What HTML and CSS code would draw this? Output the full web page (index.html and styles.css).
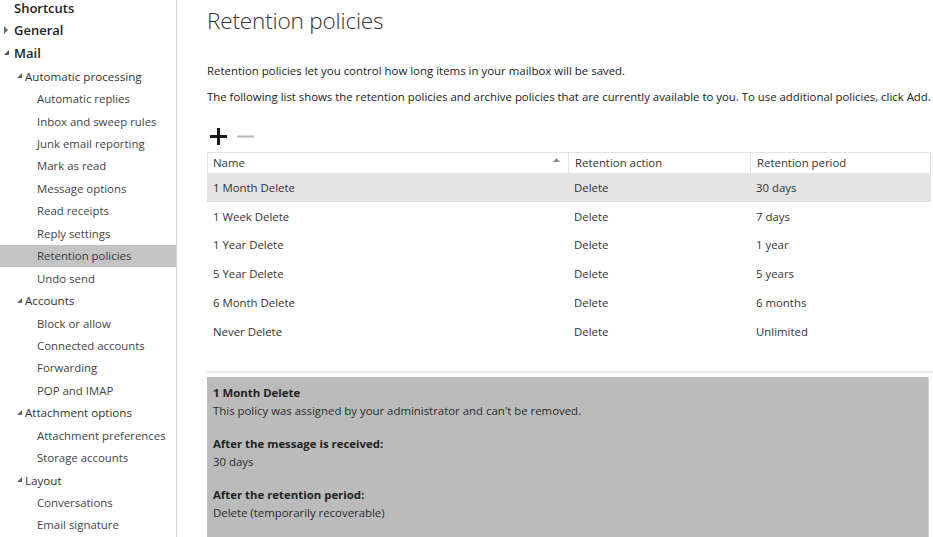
FILE: index.html
```html
<!DOCTYPE html>
<html>
<head>
<meta charset="utf-8">
<link rel="stylesheet" href="styles.css">
</head>
<body>
<div class="app">
  <nav class="sidebar">
    <div class="nav-top shortcuts"><span class="tw"></span>Shortcuts</div>
    <div class="nav-top"><span class="tw"><svg width="5" height="8" viewBox="0 0 5 8"><polygon points="0,0 4,4 0,8" fill="#6a6a6a"/></svg></span>General</div>
    <div class="nav-top"><span class="tw"><svg width="6" height="6" viewBox="0 0 6 6"><polygon points="5,0 5,5 0,5" fill="#555"/></svg></span>Mail</div>
    <div class="nav-grp"><span class="tw2"><svg width="6" height="6" viewBox="0 0 6 6"><polygon points="5,0 5,5 0,5" fill="#666"/></svg></span>Automatic processing</div>
    <div class="nav-item">Automatic replies</div>
    <div class="nav-item">Inbox and sweep rules</div>
    <div class="nav-item">Junk email reporting</div>
    <div class="nav-item">Mark as read</div>
    <div class="nav-item">Message options</div>
    <div class="nav-item">Read receipts</div>
    <div class="nav-item">Reply settings</div>
    <div class="nav-item selected">Retention policies</div>
    <div class="nav-item">Undo send</div>
    <div class="nav-grp"><span class="tw2"><svg width="6" height="6" viewBox="0 0 6 6"><polygon points="5,0 5,5 0,5" fill="#666"/></svg></span>Accounts</div>
    <div class="nav-item">Block or allow</div>
    <div class="nav-item">Connected accounts</div>
    <div class="nav-item">Forwarding</div>
    <div class="nav-item">POP and IMAP</div>
    <div class="nav-grp"><span class="tw2"><svg width="6" height="6" viewBox="0 0 6 6"><polygon points="5,0 5,5 0,5" fill="#666"/></svg></span>Attachment options</div>
    <div class="nav-item">Attachment preferences</div>
    <div class="nav-item">Storage accounts</div>
    <div class="nav-grp"><span class="tw2"><svg width="6" height="6" viewBox="0 0 6 6"><polygon points="5,0 5,5 0,5" fill="#666"/></svg></span>Layout</div>
    <div class="nav-item">Conversations</div>
    <div class="nav-item">Email signature</div>
  </nav>
  <main class="content">
    <h1 class="title">Retention policies</h1>
    <p class="intro">Retention policies let you control how long items in your mailbox will be saved.</p>
    <p class="intro2">The following list shows the retention policies and archive policies that are currently available to you. To use additional policies, click Add.</p>
    <div class="toolbar">
      <svg class="tb-icon" width="17" height="17" viewBox="0 0 17 17"><rect x="7" y="0" width="3" height="17" fill="#1a1a1a"/><rect x="0" y="7" width="17" height="3" fill="#1a1a1a"/></svg>
      <svg class="tb-icon" width="17" height="17" viewBox="0 0 17 17"><rect x="0" y="7.5" width="17" height="2" fill="#b5b5b5"/></svg>
    </div>
    <div class="table">
      <div class="thead">
        <div class="th th-name">Name<svg class="sort" width="7" height="4" viewBox="0 0 7 4"><polygon points="0,4 3.5,0 7,4" fill="#888"/></svg></div>
        <div class="th">Retention action</div>
        <div class="th">Retention period</div>
      </div>
      <div class="tr sel"><div class="td">1 Month Delete</div><div class="td">Delete</div><div class="td">30 days</div></div>
      <div class="tr"><div class="td">1 Week Delete</div><div class="td">Delete</div><div class="td">7 days</div></div>
      <div class="tr"><div class="td">1 Year Delete</div><div class="td">Delete</div><div class="td">1 year</div></div>
      <div class="tr"><div class="td">5 Year Delete</div><div class="td">Delete</div><div class="td">5 years</div></div>
      <div class="tr"><div class="td">6 Month Delete</div><div class="td">Delete</div><div class="td">6 months</div></div>
      <div class="tr"><div class="td">Never Delete</div><div class="td">Delete</div><div class="td">Unlimited</div></div>
    </div>
    <div class="divider"></div>
    <div class="details">
      <div class="d-group">
        <div class="d-label">1 Month Delete</div>
        <div class="d-text">This policy was assigned by your administrator and can't be removed.</div>
      </div>
      <div class="d-group">
        <div class="d-label">After the message is received:</div>
        <div class="d-text">30 days</div>
      </div>
      <div class="d-group">
        <div class="d-label">After the retention period:</div>
        <div class="d-text">Delete (temporarily recoverable)</div>
      </div>
    </div>
  </main>
</div>
</body>
</html>
```

FILE: styles.css
```css
html, body {
  margin: 0;
  padding: 0;
  height: 100%;
  overflow: hidden;
  background: #ffffff;
}
body {
  font-family: "Open Sans", "Noto Sans", "Liberation Sans", sans-serif;
  color: #333333;
}
.app {
  display: flex;
  height: 537px;
  overflow: hidden;
}
.sidebar {
  width: 176px;
  flex: 0 0 176px;
  border-right: 1px solid #d4d4d4;
  margin-top: -3px;
  display: flex;
  flex-direction: column;
}
.nav-top {
  height: 23.5px;
  display: flex;
  align-items: center;
  font-size: 13px;
  font-weight: 600;
  color: #1e1e1e;
  white-space: nowrap;
}
.nav-top.shortcuts {
  height: 21px;
}
.tw {
  width: 14px;
  flex: 0 0 14px;
  display: flex;
  align-items: center;
  padding-left: 4px;
  box-sizing: border-box;
}
.nav-grp {
  height: 22.45px;
  display: flex;
  align-items: center;
  font-size: 11.6px;
  color: #333;
  white-space: nowrap;
  padding-left: 17px;
}
.tw2 {
  width: 8px;
  flex: 0 0 8px;
  display: flex;
  align-items: center;
}
.nav-item {
  height: 22.45px;
  display: flex;
  align-items: center;
  font-size: 11.4px;
  color: #444;
  padding-left: 37px;
  white-space: nowrap;
}
.nav-item.selected {
  background: #c4c4c4;
  color: #3a3a3a;
}
.content {
  flex: 1;
  padding-left: 30px;
  min-width: 0;
  white-space: nowrap;
  overflow: hidden;
}
.title {
  margin: 4px 0 0 0;
  font-size: 22.6px;
  font-weight: 300;
  color: #333;
  line-height: 34px;
  letter-spacing: -0.2px;
}
.intro {
  margin: 25px 0 0 0;
  font-size: 11.45px;
  line-height: 16px;
  color: #222;
}
.intro2 {
  margin: 10px 0 0 0;
  font-size: 11.38px;
  line-height: 16px;
  color: #222;
}
.toolbar {
  display: flex;
  gap: 10px;
  margin-top: 23px;
  padding-left: 3px;
  height: 17px;
}
.table {
  margin-top: 7px;
  width: 724px;
  font-size: 11.4px;
  color: #333;
}
.thead {
  display: grid;
  grid-template-columns: 360px 182px 182px;
  height: 21px;
  border: 1px solid #e3e3e3;
  border-bottom: none;
  box-sizing: border-box;
}
.th {
  display: flex;
  align-items: center;
  padding-left: 6px;
  border-left: 1px solid #e3e3e3;
  line-height: 20px;
}
.th:first-child {
  border-left: none;
  padding-left: 5px;
}
.th-name {
  justify-content: space-between;
  padding-right: 8px;
}
.sort {
  margin-top: -6px;
}
.tr {
  display: grid;
  grid-template-columns: 360px 182px 182px;
  height: 28.8px;
  align-items: center;
}
.tr.sel {
  background: #e3e3e3;
}
.td {
  padding-left: 6px;
}
.td + .td {
  padding-left: 7px;
}
.divider {
  margin-top: 25px;
  height: 2px;
  background: #ececec;
  margin-right: 0;
}
.details {
  margin-top: 4px;
  width: 722px;
  height: 200px;
  background: #bbbbbb;
  border-right: 1px solid #d0d0d0;
  padding: 7px 6px;
  box-sizing: border-box;
  font-size: 11.4px;
  color: #222;
}
.d-group {
  margin-bottom: 15px;
}
.d-label {
  font-weight: 700;
  line-height: 18px;
  color: #222;
}
.d-text {
  line-height: 18px;
  color: #2a2a2a;
}
```
